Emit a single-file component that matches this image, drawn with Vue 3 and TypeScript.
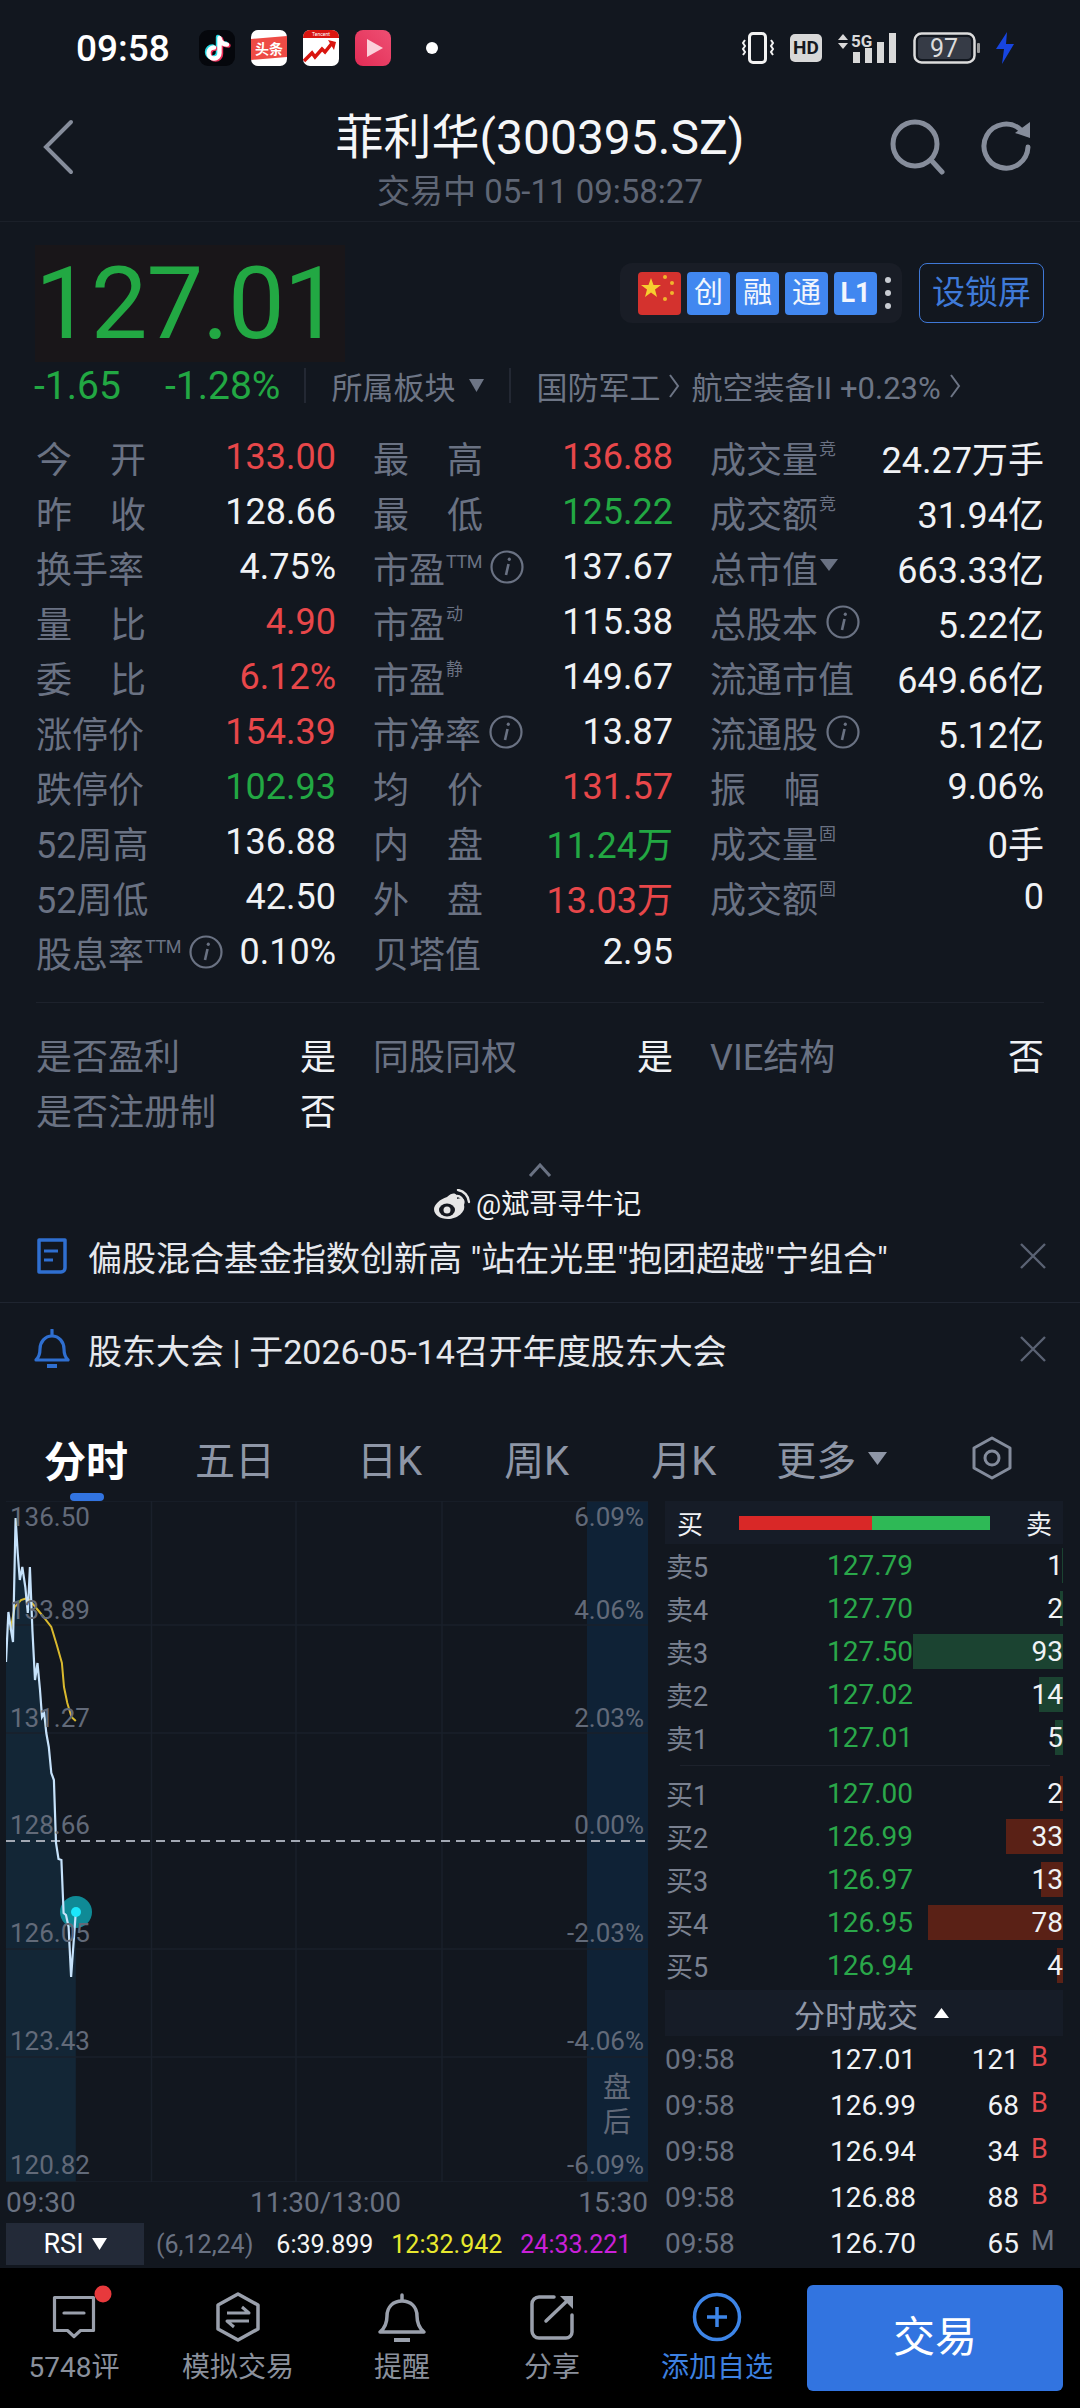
<script setup lang="ts">
type Tone = 'up' | 'down' | 'flat';

type Cell = {
  label: string;
  value: string;
  tone?: Tone;
  spread?: boolean;
  sup?: string;
  info?: boolean;
  caret?: boolean;
};

type Level = { name: string; price: string; vol: string; depth: number };
type Tick = { time: string; price: string; vol: string; flag: string };

const cells: Cell[] = [
  { label: '今开', spread: true, value: '133.00', tone: 'up' },
  { label: '昨收', spread: true, value: '128.66' },
  { label: '换手率', value: '4.75%' },
  { label: '量比', spread: true, value: '4.90', tone: 'up' },
  { label: '委比', spread: true, value: '6.12%', tone: 'up' },
  { label: '涨停价', value: '154.39', tone: 'up' },
  { label: '跌停价', value: '102.93', tone: 'down' },
  { label: '52周高', value: '136.88' },
  { label: '52周低', value: '42.50' },
  { label: '股息率', sup: 'TTM', info: true, value: '0.10%' },

  { label: '最高', spread: true, value: '136.88', tone: 'up' },
  { label: '最低', spread: true, value: '125.22', tone: 'down' },
  { label: '市盈', sup: 'TTM', info: true, value: '137.67' },
  { label: '市盈', sup: '动', value: '115.38' },
  { label: '市盈', sup: '静', value: '149.67' },
  { label: '市净率', info: true, value: '13.87' },
  { label: '均价', spread: true, value: '131.57', tone: 'up' },
  { label: '内盘', spread: true, value: '11.24万', tone: 'down' },
  { label: '外盘', spread: true, value: '13.03万', tone: 'up' },
  { label: '贝塔值', value: '2.95' },

  { label: '成交量', sup: '竞', value: '24.27万手' },
  { label: '成交额', sup: '竞', value: '31.94亿' },
  { label: '总市值', caret: true, value: '663.33亿' },
  { label: '总股本', info: true, value: '5.22亿' },
  { label: '流通市值', value: '649.66亿' },
  { label: '流通股', info: true, value: '5.12亿' },
  { label: '振幅', spread: true, value: '9.06%' },
  { label: '成交量', sup: '固', value: '0手' },
  { label: '成交额', sup: '固', value: '0' },
];

const flags = [
  { label: '是否盈利', value: '是' },
  { label: '同股同权', value: '是' },
  { label: 'VIE结构', value: '否' },
  { label: '是否注册制', value: '否' },
];

const tabs = ['五日', '日K', '周K', '月K'];
const badges = ['创', '融', '通', 'L1'];

const asks: Level[] = [
  { name: '卖5', price: '127.79', vol: '1', depth: 1 },
  { name: '卖4', price: '127.70', vol: '2', depth: 3 },
  { name: '卖3', price: '127.50', vol: '93', depth: 150 },
  { name: '卖2', price: '127.02', vol: '14', depth: 24 },
  { name: '卖1', price: '127.01', vol: '5', depth: 8 },
];

const bids: Level[] = [
  { name: '买1', price: '127.00', vol: '2', depth: 3 },
  { name: '买2', price: '126.99', vol: '33', depth: 57 },
  { name: '买3', price: '126.97', vol: '13', depth: 22 },
  { name: '买4', price: '126.95', vol: '78', depth: 135 },
  { name: '买5', price: '126.94', vol: '4', depth: 6 },
];

const ticks: Tick[] = [
  { time: '09:58', price: '127.01', vol: '121', flag: 'B' },
  { time: '09:58', price: '126.99', vol: '68', flag: 'B' },
  { time: '09:58', price: '126.94', vol: '34', flag: 'B' },
  { time: '09:58', price: '126.88', vol: '88', flag: 'B' },
  { time: '09:58', price: '126.70', vol: '65', flag: 'M' },
];

// intraday series in plot coordinates
const pricePts =
  '0,161 2.4,111 5,129 7,141 9.6,17 11.7,52 13.8,79 16.3,66 19.3,86 21.8,112 23.9,66 26.4,129 29,179 31.5,162 34,189 36,216 38.2,212 40.3,232 42.8,246 45.3,272 47.9,279 50,342 52.5,358 55.4,359 57.6,412 60,414 62.6,426 65.1,476 69.8,411';
const avgPts =
  '4.5,129 8.7,106 15,99 21.4,97 27.7,104 36,114 45.3,126 50.8,144 55.9,162 58,186 61.3,202 65.5,216 69.8,220';
const areaPts = `0,681 ${pricePts} 69.8,681`;

const gridY = [0, 124, 232, 448, 556, 681];
const gridX = [145.5, 290, 436];

const leftAxis = [
  { y: 25, text: '136.50' },
  { y: 118, text: '133.89' },
  { y: 226, text: '131.27' },
  { y: 333, text: '128.66' },
  { y: 441, text: '126.05' },
  { y: 549, text: '123.43' },
  { y: 673, text: '120.82' },
];
const rightAxis = [
  { y: 25, text: '6.09%' },
  { y: 118, text: '4.06%' },
  { y: 226, text: '2.03%' },
  { y: 333, text: '0.00%' },
  { y: 441, text: '-2.03%' },
  { y: 549, text: '-4.06%' },
  { y: 673, text: '-6.09%' },
];
</script>

<template>
  <div class="screen">
    <!-- status bar -->
    <div class="status">
      <span class="clock">09:58</span>
      <div class="app-icons">
        <svg width="36" height="36" viewBox="0 0 36 36">
          <rect width="36" height="36" rx="9" fill="#05070c" />
          <g fill="none" stroke-width="4.4" stroke-linecap="round">
            <path d="M19 7v15a5.5 5.5 0 1 1-5.5-5.5M19 7c1 4 4 6.500 7.500 6.500" stroke="#25d9e4" />
            <path d="M22 9v15a5.500 5.500 0 1 1-5.500-5.500M22 9c1 4 4 6.500 7.500 6.500" stroke="#f0305a" />
            <path d="M20.500 8v15a5.500 5.500 0 1 1-5.500-5.500M20.500 8c1 4 4 6.500 7.500 6.500" stroke="#fff" />
          </g>
        </svg>
        <svg width="36" height="36" viewBox="0 0 36 36">
          <rect width="36" height="36" rx="7" fill="#fff" />
          <polygon points="0,9 36,6 36,27 0,30" fill="#ee4b45" />
          <text x="18" y="24" text-anchor="middle" class="toutiao">头条</text>
        </svg>
        <svg width="36" height="36" viewBox="0 0 36 36">
          <rect width="36" height="36" rx="7" fill="#fff" />
          <path d="M0 8V7a7 7 0 0 1 7-7h22a7 7 0 0 1 7 7v1z" fill="#d9150f" />
          <text x="18" y="6" text-anchor="middle" class="tencent">Tencent</text>
          <path d="M1 31l8-8 3 4 7-8 3 3 8-10" fill="none" stroke="#d9150f" stroke-width="3.500" />
          <polygon points="25,10 33,12 31,20" fill="#d9150f" />
        </svg>
        <svg width="36" height="36" viewBox="0 0 36 36">
          <defs>
            <linearGradient id="playBg" x1="0" y1="1" x2="1" y2="0">
              <stop offset="0" stop-color="#e22c55" />
              <stop offset="1" stop-color="#ee4f73" />
            </linearGradient>
          </defs>
          <rect width="36" height="36" rx="8" fill="url(#playBg)" />
          <polygon points="12,9 28,18 12,27" fill="#fbd0da" />
        </svg>
      </div>
      <i class="status-dot"></i>
      <div class="sys-icons">
        <svg width="34" height="32" viewBox="0 0 34 32" fill="none" stroke="#f2f2f2">
          <rect x="8.500" y="1.500" width="16" height="29" rx="3.500" stroke-width="3" />
          <path d="M4 8l-2 3 2 3-2 3 2 3-2 3M30 8l2 3-2 3 2 3-2 3 2 3" stroke-width="2" />
        </svg>
        <span class="hd">HD</span>
        <svg width="62" height="32" viewBox="0 0 62 32">
          <polygon points="1,8 6,2 11,8" fill="#d9d9d9" />
          <polygon points="1,11 11,11 6,17" fill="#d9d9d9" />
          <text x="14" y="15" class="five-g">5G</text>
          <rect x="16" y="20" width="7" height="11" fill="#d9d9d9" />
          <rect x="28" y="16" width="7" height="15" fill="#d9d9d9" />
          <rect x="40" y="10" width="7" height="21" fill="#d9d9d9" />
          <rect x="52" y="1" width="7" height="30" fill="#d9d9d9" />
        </svg>
        <svg class="battery" width="68" height="32" viewBox="0 0 68 32">
          <rect x="1.500" y="1.500" width="60" height="29" rx="7" fill="none" stroke="#dcdcdc" stroke-width="2.500" />
          <rect x="5" y="5" width="53" height="22" rx="4" fill="#363b46" />
          <rect x="64" y="11" width="3" height="10" rx="1" fill="#9a9a9a" />
          <text x="31" y="25" text-anchor="middle" class="bat-text">97</text>
        </svg>
        <svg width="18" height="32" viewBox="0 0 18 32">
          <polygon points="11,0 0,17 8,17 6,32 18,12 10,12" fill="#1745e0" />
        </svg>
      </div>
    </div>

    <!-- title bar -->
    <header class="head">
      <div class="head-side">
        <svg width="32" height="56" viewBox="0 0 32 56" fill="none" stroke="#868d9b" stroke-width="4" stroke-linecap="round">
          <path d="M29 3L4 28l25 25" />
        </svg>
      </div>
      <div class="head-title">
        <div class="name">菲利华(300395.SZ)</div>
        <div class="sub">交易中 05-11 09:58:27</div>
      </div>
      <div class="head-side head-actions">
        <svg width="58" height="56" viewBox="0 0 58 56" fill="none" stroke="#868d9b" stroke-width="5" stroke-linecap="round">
          <circle cx="26" cy="25" r="22" />
          <path d="M42 41l11 12" />
        </svg>
        <svg width="50" height="52" viewBox="0 0 50 52" fill="none">
          <path d="M40 9a22 22 0 1 0 7 17" stroke="#868d9b" stroke-width="5" stroke-linecap="round" />
          <polygon points="34,12 49,1 49,17" fill="#868d9b" />
        </svg>
      </div>
    </header>

    <!-- quote panel -->
    <section class="quote">
      <div class="price-row">
        <div class="price">127.01</div>
        <div class="badges">
          <svg width="43" height="43" viewBox="0 0 43 43">
            <rect width="43" height="43" rx="4" fill="#d4322e" />
            <polygon points="13,6 15.500,13 23,13 17,17.500 19,25 13,20.500 7,25 9,17.500 3,13 10.500,13" fill="#f7cf2f" />
            <circle cx="27" cy="5" r="2" fill="#f0b52c" />
            <circle cx="34" cy="11" r="2" fill="#f0b52c" />
            <circle cx="34" cy="21" r="2" fill="#f0b52c" />
            <circle cx="27" cy="27" r="2" fill="#f0b52c" />
          </svg>
          <span v-for="b in badges" :key="b" class="badge" :class="{ latin: b === 'L1' }">{{ b }}</span>
          <div class="dots"><i></i><i></i><i></i></div>
        </div>
        <div class="lock">设锁屏</div>
      </div>

      <div class="change-row">
        <span class="chg chg-abs">-1.65</span>
        <span class="chg">-1.28%</span>
        <i class="sep sep-a"></i>
        <span class="muted">所属板块</span>
        <svg class="mini-caret" width="15" height="13" viewBox="0 0 15 13"><polygon points="0,0 15,0 7.500,13" fill="#6d7585" /></svg>
        <i class="sep sep-b"></i>
        <span class="muted">国防军工</span>
        <svg class="chev" width="12" height="30" viewBox="0 0 12 30" fill="none" stroke="#6d7585" stroke-width="2"><path d="M2 4l8 11-8 11" /></svg>
        <span class="muted">航空装备II +0.23%</span>
        <svg class="chev" width="12" height="30" viewBox="0 0 12 30" fill="none" stroke="#6d7585" stroke-width="2"><path d="M2 4l8 11-8 11" /></svg>
      </div>

      <div class="stats">
        <div v-for="(c, i) in cells" :key="i" class="cell">
          <span class="label">
            <span :class="{ spread: c.spread }">{{ c.label }}</span>
            <span v-if="c.sup" class="sup" :class="{ ttm: c.sup === 'TTM' }">{{ c.sup }}</span>
            <svg v-if="c.caret" class="caret" width="18" height="12" viewBox="0 0 18 12"><polygon points="0,0 18,0 9,12" fill="#6a7283" /></svg>
            <svg v-if="c.info" class="info" width="34" height="34" viewBox="0 0 34 34" fill="none" stroke="#6a7283" stroke-width="2.200">
              <circle cx="17" cy="17" r="15.500" />
              <path d="M18.500 14l-2.500 11" stroke-width="2.600" />
              <path d="M19.300 9.200v.1" stroke-width="3.200" stroke-linecap="round" />
            </svg>
          </span>
          <span class="value" :class="c.tone">{{ c.value }}</span>
        </div>
      </div>

      <div class="rule"></div>

      <div class="flags">
        <div v-for="f in flags" :key="f.label" class="cell">
          <span class="label">{{ f.label }}</span>
          <span class="value">{{ f.value }}</span>
        </div>
      </div>

      <svg class="collapse" width="24" height="14" viewBox="0 0 24 14" fill="none" stroke="#6a7283" stroke-width="3">
        <path d="M2 13l10-11 10 11" />
      </svg>
    </section>

    <!-- news strip -->
    <section class="news">
      <div class="news-row with-rule">
        <svg class="news-icon" width="34" height="36" viewBox="0 0 34 36" fill="none" stroke="#2f6fd0" stroke-width="3.500">
          <path d="M4 2h26v28a4 4 0 0 1-4 4H4z" stroke-linejoin="round" />
          <path d="M9 13h14M9 22h9" stroke-width="3" />
        </svg>
        <span class="news-text">偏股混合基金指数创新高 "站在光里"抱团超越"宁组合"</span>
        <svg class="close" width="26" height="26" viewBox="0 0 26 26" stroke="#5a6273" stroke-width="2.400"><path d="M1 1l24 24M25 1L1 25" /></svg>
      </div>
      <div class="news-row">
        <svg class="news-icon" width="36" height="40" viewBox="0 0 36 40" fill="none" stroke="#2f6fd0" stroke-width="3.200" stroke-linejoin="round">
          <path d="M2 31c3-3 4-6 4-11 0-7 5-13 12-13s12 6 12 13c0 5 1 8 4 11z" />
          <path d="M18 1v5" stroke-linecap="round" />
          <path d="M13 37h10" stroke-width="4" />
        </svg>
        <span class="news-text">股东大会 | 于2026-05-14召开年度股东大会</span>
        <svg class="close" width="26" height="26" viewBox="0 0 26 26" stroke="#5a6273" stroke-width="2.400"><path d="M1 1l24 24M25 1L1 25" /></svg>
      </div>
    </section>

    <!-- period tabs -->
    <nav class="tabs">
      <span class="tab active">分时<i class="tab-bar"></i></span>
      <span v-for="t in tabs" :key="t" class="tab">{{ t }}</span>
      <span class="tab more">更多<svg width="19" height="13" viewBox="0 0 19 13"><polygon points="0,0 19,0 9.500,13" fill="#8e96a6" /></svg></span>
      <svg class="hex" width="40" height="44" viewBox="0 0 40 44" fill="none" stroke="#848c9c" stroke-width="3">
        <polygon points="20,2 38,12 38,32 20,42 2,32 2,12" stroke-linejoin="round" />
        <circle cx="20" cy="22" r="7" />
      </svg>
    </nav>

    <!-- chart and order book -->
    <section class="market">
      <div class="chart-col">
        <svg class="plot" width="642" height="681" viewBox="0 0 642 681">
          <rect x="581" y="0" width="61" height="681" fill="#0f2236" />
          <polygon :points="areaPts" fill="#132636" />
          <g stroke="#1a202b" stroke-width="1.500">
            <line v-for="y in gridY" :key="y" x1="0" x2="642" :y1="y" :y2="y" />
            <line v-for="x in gridX" :key="x" :x1="x" :x2="x" y1="0" y2="681" />
          </g>
          <line x1="0" x2="642" y1="340" y2="340" stroke="#a3a9b4" stroke-width="2" stroke-dasharray="9 6" />
          <circle cx="70" cy="411" r="16" fill="#0f8a96" />
          <polyline :points="avgPts" fill="none" stroke="#d9b92e" stroke-width="2" />
          <polyline :points="pricePts" fill="none" stroke="#c6e2fb" stroke-width="2.200" />
          <circle cx="70" cy="411" r="5" fill="#1ce6fa" />
          <g class="axis">
            <text v-for="a in leftAxis" :key="a.text" x="4" :y="a.y">{{ a.text }}</text>
            <text v-for="a in rightAxis" :key="a.text" x="638" :y="a.y" text-anchor="end">{{ a.text }}</text>
            <text class="after-hours" x="611" y="596" text-anchor="middle">盘</text>
            <text class="after-hours" x="611" y="631" text-anchor="middle">后</text>
          </g>
        </svg>
        <div class="time-axis">
          <span>09:30</span>
          <span class="mid">11:30/13:00</span>
          <span>15:30</span>
        </div>
        <div class="rsi">
          <div class="rsi-btn">RSI<svg width="15" height="12" viewBox="0 0 15 12"><polygon points="0,0 15,0 7.500,12" fill="#fff" /></svg></div>
          <span class="rsi-param">(6,12,24)</span>
          <span class="rsi-a">6:39.899</span>
          <span class="rsi-b">12:32.942</span>
          <span class="rsi-c">24:33.221</span>
        </div>
      </div>

      <div class="book-col">
        <div class="book-head">
          <span>买</span>
          <div class="ratio"><i class="ratio-red"></i><i class="ratio-green"></i></div>
          <span>卖</span>
        </div>
        <div v-for="l in asks" :key="l.name" class="level">
          <i class="depth ask" :style="{ width: l.depth + 'px' }"></i>
          <span class="lv-name">{{ l.name }}</span>
          <span class="lv-price">{{ l.price }}</span>
          <span class="lv-vol">{{ l.vol }}</span>
        </div>
        <div class="book-rule"></div>
        <div v-for="l in bids" :key="l.name" class="level">
          <i class="depth bid" :style="{ width: l.depth + 'px' }"></i>
          <span class="lv-name">{{ l.name }}</span>
          <span class="lv-price">{{ l.price }}</span>
          <span class="lv-vol">{{ l.vol }}</span>
        </div>
        <div class="tick-head">
          分时成交
          <svg width="15" height="10" viewBox="0 0 15 10"><polygon points="7.500,0 15,10 0,10" fill="#fff" /></svg>
        </div>
        <div v-for="(t, i) in ticks" :key="i" class="tick">
          <span class="tk-time">{{ t.time }}</span>
          <span class="tk-price">{{ t.price }}</span>
          <span class="tk-vol">{{ t.vol }}</span>
          <span class="tk-flag" :class="{ neutral: t.flag === 'M' }">{{ t.flag }}</span>
        </div>
      </div>
    </section>

    <!-- bottom actions -->
    <footer class="bottom">
      <div class="act act-a">
        <svg width="50" height="50" viewBox="0 0 50 50" fill="none" stroke="#9aa0ac" stroke-width="3.200" stroke-linejoin="round">
          <path d="M5.500 5.500h39v33h-13l-6.500 6-6.500-6h-13z" />
          <path d="M15 21h20" stroke-linecap="round" />
          <circle cx="54" cy="2" r="8.500" fill="#e8393c" stroke="none" />
        </svg>
        <span>5748评</span>
      </div>
      <div class="act act-b">
        <svg width="50" height="50" viewBox="0 0 50 50" fill="none" stroke="#9aa0ac" stroke-width="3.500" stroke-linejoin="round">
          <polygon points="25,2 45,13 45,37 25,48 5,37 5,13" />
          <path d="M14 21h22l-7-6M36 29H14l7 6" stroke-width="3" />
        </svg>
        <span>模拟交易</span>
      </div>
      <div class="act act-c">
        <svg width="50" height="50" viewBox="0 0 50 50" fill="none" stroke="#9aa0ac" stroke-width="3.500" stroke-linejoin="round">
          <path d="M3 40c5-4 7-9 7-16 0-9 6-15 15-15s15 6 15 15c0 7 2 12 7 16z" />
          <path d="M25 3v5" stroke-linecap="round" />
          <path d="M17 48h16" stroke-width="4" />
        </svg>
        <span>提醒</span>
      </div>
      <div class="act act-d">
        <svg width="50" height="50" viewBox="0 0 50 50" fill="none" stroke="#9aa0ac" stroke-width="3.500" stroke-linecap="round">
          <path d="M27 5H12a7 7 0 0 0-7 7v27a7 7 0 0 0 7 7h27a6 6 0 0 0 6-6V23" />
          <path d="M19 29L41 8" />
          <polygon points="33,4 46,4 46,17" fill="#9aa0ac" stroke="none" />
        </svg>
        <span>分享</span>
      </div>
      <div class="act act-e">
        <svg width="50" height="50" viewBox="0 0 50 50" fill="none" stroke="#3d85e8" stroke-width="3.500">
          <circle cx="25" cy="25" r="22.500" />
          <path d="M15 25h20M25 15v20" />
        </svg>
        <span>添加自选</span>
      </div>
      <div class="trade">交易</div>
    </footer>

    <!-- reposter's mark laid over the page -->
    <div class="mark">
      <svg width="38" height="32" viewBox="0 0 38 32">
        <path d="M14 8C20 2 25 4 24 10c6-2 9 1 7 6 2 7-7 14-16 14C7 30 1 26 1 20 1 16 7 10 14 8z" fill="#e6e6e6" />
        <ellipse cx="14" cy="21" rx="8" ry="6.500" fill="#15181f" />
        <circle cx="14" cy="21" r="3.500" fill="#e6e6e6" />
        <path d="M24 7a6 6 0 0 1 6 6M25 1a13 13 0 0 1 11 12" fill="none" stroke="#e6e6e6" stroke-width="2.400" stroke-linecap="round" />
      </svg>
      <span>@斌哥寻牛记</span>
    </div>
  </div>
</template>

<style scoped>
.screen {
  position: relative;
  width: 1080px;
  height: 2408px;
  overflow: hidden;
  display: flex;
  flex-direction: column;
  background: #12171f;
  color: #f0f2f5;
  font-family: Roboto, "Noto Sans CJK SC", sans-serif;
}

i {
  display: block;
  font-style: normal;
}

/* status bar */
.status {
  height: 96px;
  flex: none;
  display: flex;
  align-items: center;
  padding: 0 66px 0 76px;
}
.clock {
  width: 123px;
  font-size: 37px;
  font-weight: 500;
  color: #fff;
}
.app-icons {
  display: flex;
  gap: 16px;
}
.toutiao {
  font-size: 14px;
  font-weight: 700;
  fill: #fff;
}
.tencent {
  font-size: 5px;
  fill: #fff;
}
.status-dot {
  width: 12px;
  height: 12px;
  margin-left: 35px;
  border-radius: 50%;
  background: #fff;
}
.sys-icons {
  margin-left: auto;
  display: flex;
  align-items: center;
  gap: 15px;
}
.hd {
  width: 32px;
  height: 28px;
  border-radius: 5px;
  background: #d8d8d8;
  color: #15181f;
  font-size: 19px;
  font-weight: 700;
  line-height: 28px;
  text-align: center;
}
.five-g {
  font-size: 17px;
  font-weight: 700;
  fill: #d9d9d9;
}
.battery {
  margin-left: -1px;
}
.bat-text {
  font-size: 25px;
  fill: #dcdcdc;
}

/* title bar */
.head {
  height: 126px;
  flex: none;
  display: grid;
  grid-template-columns: 1fr auto 1fr;
  border-bottom: 1px solid #1b2029;
  box-sizing: border-box;
}
.head-side {
  display: flex;
  align-items: center;
  padding: 0 0 24px 42px;
}
.head-actions {
  justify-content: flex-end;
  gap: 34px;
  padding: 0 49px 24px 0;
}
.head-title {
  padding-top: 14px;
  text-align: center;
}
.name {
  font-size: 48px;
  line-height: 56px;
  color: #f5f6f8;
}
.sub {
  margin-top: 6px;
  font-size: 33px;
  line-height: 40px;
  color: #5f6675;
}

/* quote panel */
.quote {
  height: 970px;
  flex: none;
  padding: 0 36px;
  box-sizing: border-box;
  display: flex;
  flex-direction: column;
}
.price-row {
  display: flex;
  align-items: flex-start;
  margin-top: 23px;
}
.price {
  width: 310px;
  height: 117px;
  margin-left: -1px;
  background: #191619;
  color: #22a843;
  font-size: 101px;
  line-height: 117px;
  letter-spacing: -1px;
}
.badges {
  margin: 18px 0 0 auto;
  width: 282px;
  height: 60px;
  box-sizing: border-box;
  padding-left: 18px;
  display: flex;
  align-items: center;
  gap: 6px;
  border-radius: 12px;
  background: #191d26;
}
.badge {
  width: 43px;
  height: 43px;
  border-radius: 4px;
  background: #4187f0;
  color: #f2f6fd;
  font-size: 29px;
  line-height: 43px;
  text-align: center;
}
.badge.latin {
  font-size: 27px;
  font-weight: 700;
}
.dots {
  display: flex;
  flex-direction: column;
  gap: 7px;
  margin-left: 2px;
}
.dots i {
  width: 6px;
  height: 6px;
  border-radius: 50%;
  background: #c9ccd2;
}
.lock {
  margin: 18px 0 0 17px;
  width: 125px;
  height: 60px;
  box-sizing: border-box;
  border: 1.5px solid #3f78d6;
  border-radius: 8px;
  color: #3f7ad8;
  font-size: 33px;
  line-height: 57px;
  text-align: center;
}

.change-row {
  height: 35px;
  margin-top: 6px;
  display: flex;
  align-items: center;
  white-space: nowrap;
}
.chg {
  font-size: 39px;
  color: #22a843;
}
.chg-abs {
  margin-left: -2px;
  width: 131px;
}
.sep {
  width: 2px;
  height: 35px;
  background: #232833;
}
.sep-a {
  margin: 0 25px 0 24px;
}
.sep-b {
  margin: 0 25px 0 25px;
}
.muted {
  font-size: 31px;
  color: #6d7585;
}
.mini-caret {
  margin-left: 14px;
}
.chev {
  margin: 0 11px 0 8px;
}

.stats {
  margin-top: 26px;
  display: grid;
  grid-auto-flow: column;
  grid-template-rows: repeat(10, 55px);
  grid-template-columns: 300px 300px 334px;
  column-gap: 37px;
}
.cell {
  display: flex;
  align-items: center;
  justify-content: space-between;
  white-space: nowrap;
}
.label {
  display: flex;
  align-items: center;
  height: 100%;
  font-size: 36px;
  color: #6a7283;
}
.spread {
  display: block;
  width: 110px;
  text-align-last: justify;
}
.sup {
  align-self: flex-start;
  margin: 12px 0 0 1px;
  font-size: 17px;
  line-height: 1;
}
.sup.ttm {
  font-size: 18px;
  margin-top: 14px;
  letter-spacing: -0.5px;
}
.caret {
  margin: -4px 0 0 2px;
}
.info {
  margin-left: 8px;
}
.value {
  font-size: 36px;
  color: #f0f2f5;
}
.value.up {
  color: #e8474a;
}
.value.down {
  color: #22a843;
}

.rule {
  margin-top: 23px;
  height: 1px;
  background: #1d222c;
}
.flags {
  margin-top: 23px;
  display: grid;
  grid-template-rows: repeat(2, 55px);
  grid-template-columns: 300px 300px 334px;
  column-gap: 37px;
}
.collapse {
  margin: 27px auto 0;
}

/* news strip */
.news {
  margin-top: 18px;
  flex: none;
  height: 185px;
  background: #12171f;
}
.news-row {
  height: 92px;
  display: flex;
  align-items: center;
  padding: 0 34px 0 35px;
}
.news-row.with-rule {
  height: 93px;
  box-sizing: border-box;
  border-bottom: 1px solid #1f2530;
}
.news-icon {
  margin-left: -1px;
  width: 36px;
}
.news-text {
  margin-left: 18px;
  font-size: 34px;
  color: #e6e8ed;
  white-space: nowrap;
}
.close {
  margin-left: auto;
}

/* period tabs */
.tabs {
  position: relative;
  margin-top: 17px;
  height: 89px;
  flex: none;
  box-sizing: border-box;
  padding: 3px 68px 0 44px;
  display: flex;
  align-items: center;
  gap: 82px;
  background: #12171f;
}
.tab {
  font-size: 40px;
  color: #8e96a6;
  white-space: nowrap;
}
.tab.active {
  margin-right: -15px;
  font-size: 42px;
  font-weight: 700;
  color: #fff;
}
.tab.more {
  margin-left: -22px;
  display: flex;
  align-items: center;
  gap: 12px;
}
.tab-bar {
  position: absolute;
  left: 70px;
  bottom: 0;
  width: 34px;
  height: 8px;
  border-radius: 4px;
  background: #3274e0;
}
.hex {
  margin-left: auto;
}

/* chart and order book */
.market {
  height: 767px;
  flex: none;
  display: flex;
  padding-left: 6px;
}
.chart-col {
  width: 642px;
  flex: none;
}
.plot {
  display: block;
}
.axis text {
  font-family: Roboto, "Noto Sans CJK SC", sans-serif;
  font-size: 26px;
  fill: #626a79;
}
.axis .after-hours {
  font-size: 28px;
}
.time-axis {
  height: 41px;
  display: flex;
  justify-content: space-between;
  align-items: center;
  font-size: 28px;
  color: #6a7282;
}
.time-axis .mid {
  margin-left: -3px;
}
.rsi {
  height: 42px;
  display: flex;
  align-items: center;
  gap: 18px;
  font-size: 25px;
  white-space: nowrap;
}
.rsi-btn {
  width: 138px;
  height: 42px;
  display: flex;
  align-items: center;
  justify-content: center;
  gap: 8px;
  background: #232a38;
  color: #fff;
  font-size: 27px;
}
.rsi-param {
  margin: 0 5px 0 -6px;
  color: #6a7282;
}
.rsi-a {
  color: #f5f5f5;
}
.rsi-b {
  color: #e8e82e;
}
.rsi-c {
  color: #c920d8;
}

.book-col {
  width: 398px;
  flex: none;
  margin-left: 17px;
}
.book-head {
  height: 43px;
  display: flex;
  align-items: center;
  justify-content: space-between;
  padding: 0 11px 0 12px;
  background: #161c27;
  font-size: 26px;
  color: #f0f2f5;
}
.ratio {
  display: flex;
  width: 251px;
  height: 14px;
}
.ratio-red {
  width: 133px;
  background: #d92827;
}
.ratio-green {
  flex: 1;
  background: #2eb956;
}
.level {
  position: relative;
  height: 43px;
  display: flex;
  align-items: center;
}
.depth {
  position: absolute;
  top: 4px;
  right: 0;
  height: 35px;
}
.depth.ask {
  background: #1b4331;
}
.depth.bid {
  background: #5a2116;
}
.lv-name,
.lv-price,
.lv-vol {
  position: relative;
  font-size: 28px;
}
.lv-name {
  width: 162px;
  padding-left: 1px;
  box-sizing: border-box;
  font-size: 27px;
  color: #7a8190;
}
.lv-price {
  color: #2aa84a;
}
.lv-vol {
  margin-left: auto;
  color: #f0f2f5;
}
.book-rule {
  margin: 6px 13px 6px 15px;
  height: 1px;
  background: #1d222c;
}
.tick-head {
  margin-top: 3px;
  height: 46px;
  display: flex;
  align-items: center;
  justify-content: center;
  gap: 16px;
  padding-left: 15px;
  background: #161c27;
  font-size: 31px;
  color: #8e96a6;
}
.tick {
  height: 46px;
  display: flex;
  align-items: center;
  font-size: 28px;
  white-space: nowrap;
}
.tk-time {
  width: 165px;
  color: #6a7282;
}
.tk-price {
  width: 100px;
  color: #f0f2f5;
}
.tk-vol {
  width: 89px;
  text-align: right;
  color: #f0f2f5;
}
.tk-flag {
  margin: -4px 0 0 12px;
  font-size: 27px;
  color: #e2474b;
}
.tk-flag.neutral {
  color: #6a7282;
}

/* bottom actions */
.bottom {
  height: 140px;
  flex: none;
  display: flex;
  background: #000;
}
.act {
  flex: none;
  padding-top: 24px;
  display: flex;
  flex-direction: column;
  align-items: center;
  color: #8a909c;
  font-size: 28px;
  line-height: 36px;
}
.act svg {
  overflow: visible;
}
.act span {
  margin-top: 8px;
}
.act-a {
  width: 148px;
}
.act-b {
  width: 180px;
}
.act-c {
  width: 148px;
}
.act-d {
  width: 152px;
}
.act-e {
  width: 178px;
  color: #3d80e0;
}
.trade {
  width: 256px;
  height: 106px;
  margin: 17px 0 0 1px;
  border-radius: 6px;
  background: #3274e0;
  color: #fff;
  font-size: 42px;
  line-height: 106px;
  text-align: center;
}

/* reposter's mark */
.mark {
  position: absolute;
  left: 433px;
  top: 1188px;
  display: flex;
  align-items: center;
  gap: 5px;
  font-size: 28px;
  line-height: 34px;
  color: #f2f2f2;
}
</style>

<style>
html,
body {
  margin: 0;
  background: #000;
}
</style>
